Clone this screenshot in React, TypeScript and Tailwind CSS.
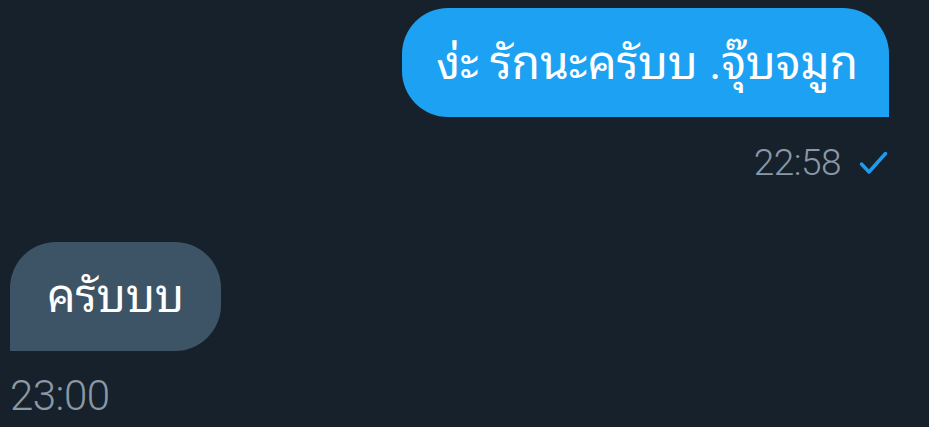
import React from "react";

export default function App() {
  return (
    <div className="w-[929px] h-[427px] bg-[#17212b] overflow-hidden relative" style={{ fontFamily: "Roboto, 'Noto Sans Thai Looped', 'Noto Sans', sans-serif" }}>
      <div className="flex flex-col items-end pr-[40px] pt-[8px]">
        <div className="h-[109px] pl-[34px] pr-[31px] flex items-center bg-[#1da1f2] rounded-tl-[46px] rounded-tr-[46px] rounded-bl-[46px] text-white text-[46px] leading-none">
          ง่ะ รักนะครับบ .จุ๊บจมูก
        </div>
        <div className="flex items-center mt-[27px] mr-[1px] gap-[18px]">
          <span className="text-[37px] font-light text-[#8b98a5] leading-none tracking-[-0.5px]">22:58</span>
          <svg width="29" height="24" viewBox="0 0 29 24" fill="none">
            <path d="M2.5 13 L10 21 L26.5 2.5" stroke="#1d9bf0" strokeWidth="3.5" strokeLinecap="round" strokeLinejoin="round" />
          </svg>
        </div>
      </div>
      <div className="flex flex-col items-start pl-[10px] mt-[61px]">
        <div className="h-[109px] pl-[37px] pr-[37px] flex items-center bg-[#3d5466] rounded-tl-[46px] rounded-tr-[46px] rounded-br-[46px] text-white text-[45px] leading-none">
          ครับบบ
        </div>
        <span className="mt-[24px] text-[42px] font-light text-[#8b98a5] leading-none tracking-[-0.5px]">23:00</span>
      </div>
    </div>
  );
}
